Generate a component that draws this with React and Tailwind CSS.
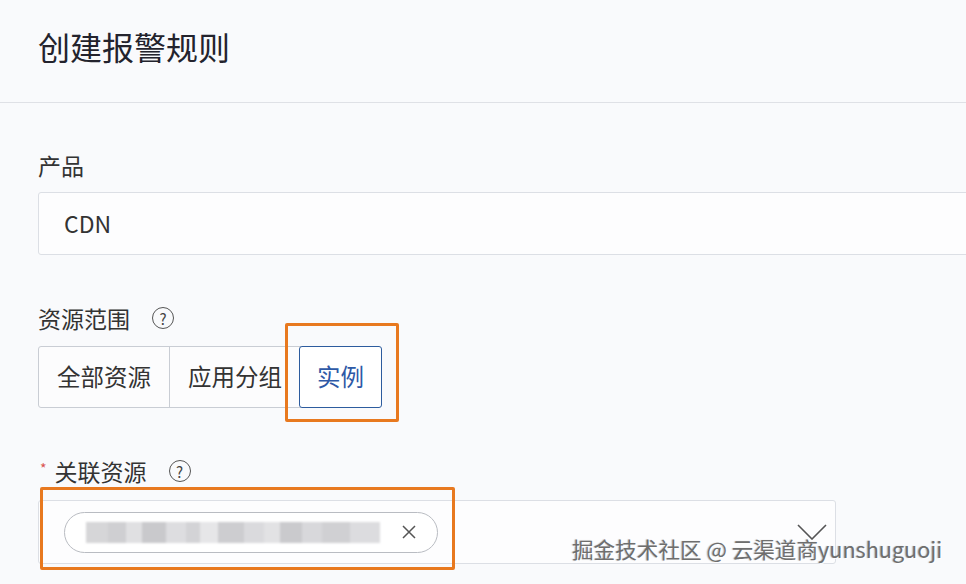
import React from 'react';

const font = { fontFamily: '"Noto Sans CJK SC", "Noto Sans", sans-serif' };

function HelpIcon() {
  return (
    <span className="ml-[22px] inline-flex h-[22px] w-[22px] items-center justify-center rounded-full border-[1.5px] border-[#555] text-[15px] leading-none text-[#444]">
      ?
    </span>
  );
}

// blurred resource name inside the tag
const blocks = [
  ['#d6d6d8', 22], ['#cfcfd2', 18], ['#e0e0e2', 16], ['#c9c9cc', 24], ['#dddde0', 20],
  ['#d3d3d6', 14], ['#e6e6e8', 18], ['#cdcdd0', 26], ['#dadadd', 20], ['#e2e2e4', 16],
  ['#cacacd', 22], ['#d8d8db', 20], ['#d0d0d3', 28], ['#dcdcdf', 30],
];

function App() {
  return (
    <div className="relative h-[584px] w-full overflow-hidden bg-[#f9fafc] text-[#2b2b33]" style={font}>
      <header className="h-[103px] border-b border-[#dfe1e6] pl-[38px] pt-[24px]">
        <h1 className="text-[32px] leading-[44px] text-[#23232d]">创建报警规则</h1>
      </header>

      <div className="pl-[38px]">
        <div className="mt-[47px] text-[23px] leading-[30px] text-[#333]">产品</div>
        <div className="mt-[12px] flex h-[63px] w-[940px] items-center rounded-[3px] border border-[#dcdfe5] bg-[#fdfdfe] pl-[25px] text-[23px] text-[#333]">
          CDN
        </div>

        <div className="mt-[48px] flex items-center text-[23px] leading-[30px] text-[#333]">
          资源范围
          <HelpIcon />
        </div>
        <div className="mt-[13px] flex h-[62px] text-[23.5px] text-[#333]">
          <div className="flex items-center rounded-l-[3px] border border-[#c9cdd4] bg-[#fcfcfd] px-[18px]">全部资源</div>
          <div className="-ml-px flex items-center border border-[#c9cdd4] bg-[#fcfcfd] px-[18px]">应用分组</div>
          <div className="-ml-[2px] flex items-center rounded-[3px] border-[1.5px] border-[#2d5c9e] bg-white px-[17px] text-[#2e59a6]">实例</div>
        </div>

        <div className="mt-[48px] flex items-center text-[23px] leading-[30px] text-[#333]">
          <span className="ml-[2px] mr-[8px] mt-[-6px] text-[14px] text-[#d9534f]">*</span>
          关联资源
          <HelpIcon />
        </div>
        <div className="mt-[14px] flex h-[64px] w-[798px] items-center rounded-[3px] border border-[#dcdfe5] bg-[#fdfdfe] pl-[25px] pr-[8px]">
          <div className="flex h-[41px] w-[374px] items-center rounded-full border border-[#b9bcc2] bg-white pl-[21px] pr-[20px]">
            <div className="flex h-[21px] w-[294px] overflow-hidden blur-[1px]">
              {blocks.map(([c, w], i) => (
                <div key={i} className="h-full" style={{ background: c, width: w }} />
              ))}
            </div>
            <svg className="ml-auto" width="16" height="16" viewBox="0 0 16 16" fill="none" stroke="#555" strokeWidth="1.5">
              <path d="M2 2l12 12M14 2L2 14" />
            </svg>
          </div>
          <svg className="ml-auto" width="30" height="16" viewBox="0 0 30 16" fill="none" stroke="#555" strokeWidth="1.6">
            <path d="M1 1l14 14L29 1" />
          </svg>
        </div>
      </div>

      {/* annotation boxes */}
      <div className="absolute left-[285px] top-[323px] h-[99px] w-[114px] rounded-[2px] border-[3px] border-[#e8791f]" />
      <div className="absolute left-[40px] top-[487px] h-[83px] w-[415px] rounded-[2px] border-[3px] border-[#e8791f]" />

      {/* watermark */}
      <div className="absolute left-[572px] top-[534px] whitespace-nowrap text-[21.6px] leading-[30px] text-[#6e6e6e] [text-shadow:1px_1px_0_rgba(255,255,255,0.9),-1px_0_1px_rgba(0,0,0,0.25)]">
        掘金技术社区 @ 云渠道商yunshuguoji
      </div>
    </div>
  );
}

export default App;
